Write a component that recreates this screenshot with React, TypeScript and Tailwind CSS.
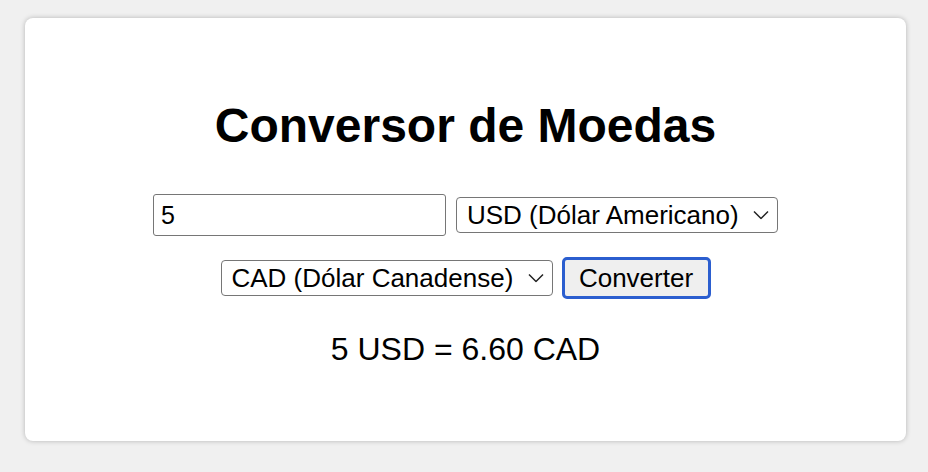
import React, { useState } from 'react';

const rates: Record<string, number> = { USD: 1, CAD: 1.32, EUR: 0.92, BRL: 4.95 };

const Chevron: React.FC = () => (
    <svg
        className="pointer-events-none absolute right-[9px] top-1/2 -translate-y-1/2"
        width="16"
        height="9"
        viewBox="0 0 16 9"
        fill="none"
    >
        <path d="M1 1 L8 8 L15 1" stroke="#222" strokeWidth="1.5" />
    </svg>
);

const App: React.FC = () => {
    const [amount, setAmount] = useState('5');
    const [from, setFrom] = useState('USD');
    const [to, setTo] = useState('CAD');
    const [result, setResult] = useState('5 USD = 6.60 CAD');

    const convert = () => {
        const value = parseFloat(amount) || 0;
        const out = (value / rates[from]) * rates[to];
        setResult(`${amount} ${from} = ${out.toFixed(2)} ${to}`);
    };

    return (
        <div className="min-h-screen w-full bg-[#f0f0f0] pl-[25px] pr-[22px] pt-[18px] font-['Liberation_Sans',Arial,sans-serif] text-black">
            <div className="flex h-[423px] flex-col items-center rounded-[8px] bg-white pt-[80px] shadow-[0_0_5px_rgba(0,0,0,0.25)]">
                <h1 className="text-[48px] font-bold leading-[55px]">Conversor de Moedas</h1>

                {/* Valor e moeda de origem */}
                <div className="mt-[41px] flex items-center gap-[10px]">
                    <input
                        type="text"
                        value={amount}
                        onChange={(e) => setAmount(e.target.value)}
                        className="h-[42px] w-[293px] rounded-[3px] border border-[#767676] bg-white px-[7px] text-[25px] outline-none"
                    />
                    <div className="relative">
                        <select
                            value={from}
                            onChange={(e) => setFrom(e.target.value)}
                            className="h-[36px] w-[322px] appearance-none rounded-[4px] border border-[#767676] bg-white pl-[10px] text-[26px] leading-[30px] outline-none"
                        >
                            <option value="USD">USD (Dólar Americano)</option>
                            <option value="CAD">CAD (Dólar Canadense)</option>
                            <option value="EUR">EUR (Euro)</option>
                            <option value="BRL">BRL (Real Brasileiro)</option>
                        </select>
                        <Chevron />
                    </div>
                </div>

                {/* Moeda de destino */}
                <div className="mt-[21px] flex items-center gap-[9px]">
                    <div className="relative">
                        <select
                            value={to}
                            onChange={(e) => setTo(e.target.value)}
                            className="h-[36px] w-[332px] appearance-none rounded-[4px] border border-[#767676] bg-white pl-[10px] text-[26px] leading-[30px] outline-none"
                        >
                            <option value="USD">USD (Dólar Americano)</option>
                            <option value="CAD">CAD (Dólar Canadense)</option>
                            <option value="EUR">EUR (Euro)</option>
                            <option value="BRL">BRL (Real Brasileiro)</option>
                        </select>
                        <Chevron />
                    </div>
                    <button
                        onClick={convert}
                        className="h-[42px] w-[149px] rounded-[5px] border-[3px] border-[#2b5ecf] bg-[#efefef] text-[26px] leading-[30px]"
                    >
                        Converter
                    </button>
                </div>

                <p className="mt-[32px] text-[32px] leading-[37px]">{result}</p>
            </div>
        </div>
    );
};

export default App;
